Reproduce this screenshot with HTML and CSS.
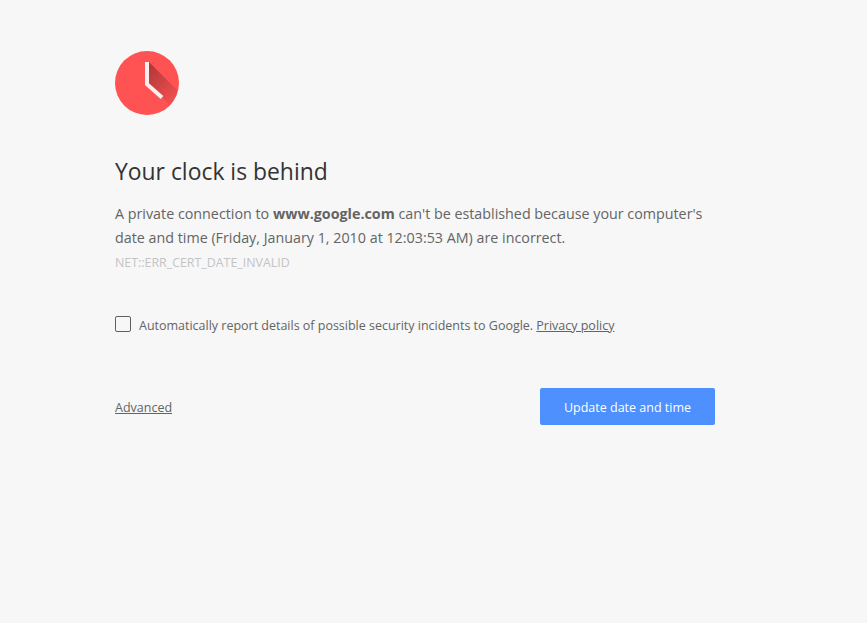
FILE: index.html
```html
<!DOCTYPE html>
<html lang="en">
<head>
<meta charset="utf-8">
<title>Your clock is behind</title>
<link rel="stylesheet" href="styles.css">
</head>
<body>
<main class="page">
  <svg class="icon" width="64" height="64" viewBox="0 0 64 64" aria-hidden="true">
    <defs>
      <linearGradient id="shade" x1="32" y1="20" x2="60" y2="48" gradientUnits="userSpaceOnUse">
        <stop offset="0" stop-color="#000" stop-opacity=".3"/>
        <stop offset="1" stop-color="#000" stop-opacity=".05"/>
      </linearGradient>
      <clipPath id="disc"><circle cx="32" cy="32" r="32"/></clipPath>
    </defs>
    <circle cx="32" cy="32" r="32" fill="#ff5252"/>
    <polygon clip-path="url(#disc)" fill="url(#shade)" points="34,11 70,47 70,70 48,47 32,33"/>
    <path d="M32 11V33.2L47 46.5" fill="none" stroke="#fbeeee" stroke-width="4"/>
  </svg>
  <h1 class="title">Your clock is behind</h1>
  <p class="message">A private connection to <strong>www.google.com</strong> can't be established because your computer's date and time (Friday, January 1, 2010 at 12:03:53 AM) are incorrect.</p>
  <p class="code">NET::ERR_CERT_DATE_INVALID</p>
  <div class="report">
    <span class="box"></span>
    <span class="report-text">Automatically report details of possible security incidents to Google. <a href="#">Privacy policy</a></span>
  </div>
  <div class="actions">
    <a class="advanced" href="#">Advanced</a>
    <button class="primary" type="button">Update date and time</button>
  </div>
</main>
</body>
</html>
```
FILE: styles.css
```css
* { box-sizing: border-box; }
html, body { margin: 0; height: 100%; }
body {
  background: #f7f7f7;
  color: #646464;
  font-family: "Open Sans", "Noto Sans", sans-serif;
}
.page {
  width: 600px;
  margin-left: 115px;
  padding-top: 51px;
}
.icon { display: block; }
.title {
  margin: 39px 0 0;
  color: #333;
  font-size: 22.9px;
  font-weight: 400;
  line-height: 36px;
}
.message {
  margin: 11.5px 0 0;
  font-size: 14.3px;
  line-height: 24.6px;
}
.message strong { font-weight: 700; }
.code {
  margin: 2.3px 0 0;
  color: #c4c4c4;
  font-size: 12.4px;
  line-height: 20px;
}
.report {
  display: flex;
  align-items: flex-start;
  gap: 8px;
  margin-top: 43px;
  font-size: 12.5px;
  line-height: 20px;
  letter-spacing: -0.01px;
}
.box {
  flex: none;
  width: 16px;
  height: 16px;
  border: 1px solid #5f5f5f;
  border-radius: 2px;
}
.report-text a, .advanced { color: #646464; }
.actions {
  display: flex;
  justify-content: space-between;
  align-items: center;
  margin-top: 52px;
}
.advanced { font-size: 12.5px; padding-top: 3px; }
.primary {
  width: 175px;
  height: 37px;
  padding: 2px 0 0;
  border: 0;
  border-radius: 2px;
  background: #4d90fe;
  color: #fff;
  font: 400 12.5px "Open Sans", "Noto Sans", sans-serif;
}
```
